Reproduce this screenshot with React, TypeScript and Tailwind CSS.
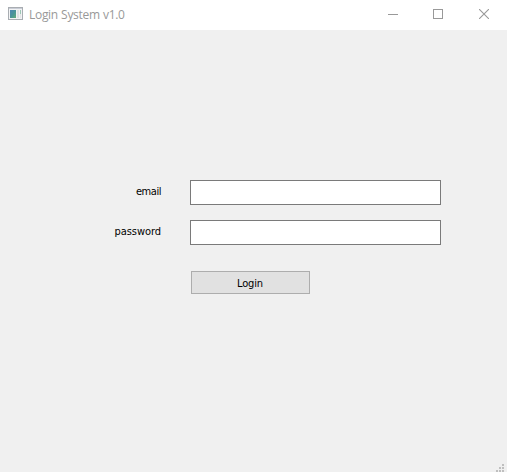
import { useState } from "react";

function AppIcon() {
  return (
    <svg width="16" height="14" viewBox="0 0 16 14" className="block shrink-0" shapeRendering="crispEdges">
      <defs>
        <linearGradient id="pane" x1="0" y1="0" x2="1" y2="1">
          <stop offset="0" stopColor="#4f86b4" />
          <stop offset="0.5" stopColor="#4a949a" />
          <stop offset="1" stopColor="#62ad77" />
        </linearGradient>
      </defs>
      <rect x="0" y="0" width="15" height="13" fill="#a9adb2" />
      <rect x="1" y="1" width="13" height="1" fill="#c9cdd6" />
      <rect x="1" y="2" width="13" height="10" fill="#f2f3f4" />
      <rect x="2" y="3" width="6" height="8" fill="url(#pane)" />
      <rect x="9" y="3" width="2" height="8" fill="#dfe1e3" />
      <rect x="12" y="3" width="1" height="4" fill="#9cc7b4" />
      <rect x="12" y="7" width="1" height="4" fill="#e4e5e6" />
    </svg>
  );
}

function TitleBar() {
  return (
    <header className="flex h-[30px] shrink-0 bg-white">
      <div className="flex flex-1 pl-2 pt-[7px]">
        <AppIcon />
        <span className="ml-[5px] whitespace-nowrap font-['Open_Sans','Noto_Sans',sans-serif] text-[12px] leading-4 tracking-[-0.3px] [word-spacing:0.4px] text-[#999999]">
          Login System v1.0
        </span>
      </div>
      <div className="flex text-[#999999]">
        <button aria-label="Minimize" className="flex w-[45px] justify-center pt-[9px]">
          <svg width="10" height="11" className="block" shapeRendering="crispEdges">
            <path d="M0 5.5h10" stroke="currentColor" />
          </svg>
        </button>
        <button aria-label="Maximize" className="flex w-[46px] justify-center pt-[9px]">
          <svg width="10" height="10" className="block" shapeRendering="crispEdges">
            <path d="M.5 .5h9v9h-9z" fill="none" stroke="currentColor" />
          </svg>
        </button>
        <button aria-label="Close" className="flex w-[46px] justify-center pt-[9px]">
          <svg width="10" height="10" className="block">
            <path d="M0 0l10 10M10 0L0 10" stroke="currentColor" strokeWidth="1.1" />
          </svg>
        </button>
      </div>
    </header>
  );
}

type FieldProps = {
  label: string;
  tracking: string;
  type: string;
  value: string;
  onChange: (v: string) => void;
};

function Field({ label, tracking, type, value, onChange }: FieldProps) {
  return (
    <label className="flex h-[25px]">
      <span className={`w-[161px] pt-[5px] text-right leading-[14px] ${tracking}`}>{label}</span>
      <input
        type={type}
        value={value}
        onChange={(e) => onChange(e.target.value)}
        className="ml-[29px] w-[251px] border border-[#7a7a7a] bg-white px-1 outline-none"
      />
    </label>
  );
}

function SizeGrip() {
  return (
    <svg width="8" height="8" className="mr-[3px] mt-auto block self-end" fill="#bfbfbf" shapeRendering="crispEdges">
      <path d="M6 0h2v2H6zM3 3h2v2H3zM6 3h2v2H6zM0 6h2v2H0zM3 6h2v2H3zM6 6h2v2H6z" />
    </svg>
  );
}

export default function App() {
  const [email, setEmail] = useState("");
  const [password, setPassword] = useState("");
  return (
    <div className="flex h-screen w-full flex-col overflow-hidden bg-[#f0f0f0] font-['DejaVu_Sans_Condensed','DejaVu_Sans',sans-serif] text-[11px] text-black">
      <TitleBar />
      <main className="flex flex-1 flex-col pt-[150px]">
        <form className="flex flex-col gap-[15px]" onSubmit={(e) => e.preventDefault()}>
          <Field label="email" tracking="tracking-[-0.45px]" type="text" value={email} onChange={setEmail} />
          <Field label="password" tracking="tracking-[-0.05px]" type="password" value={password} onChange={setPassword} />
          <button className="ml-[191px] mt-[11px] h-[23px] w-[119px] border border-[#adadad] bg-[#e1e1e1] pr-px pt-[2px] leading-[19px] tracking-[-0.15px]">
            Login
          </button>
        </form>
        <SizeGrip />
      </main>
    </div>
  );
}
